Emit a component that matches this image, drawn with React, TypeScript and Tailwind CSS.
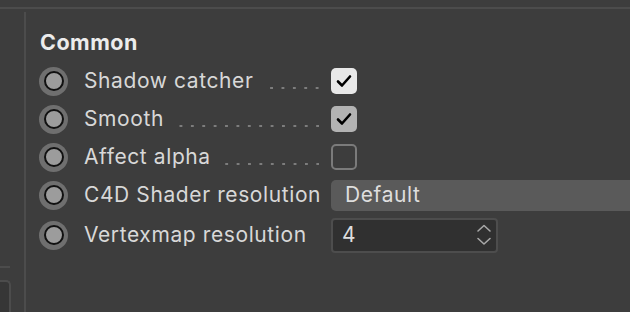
import React from 'react';

const font = { fontFamily: 'Inter, "Noto Sans", sans-serif' };

function Radio() {
  return (
    <div className="w-[29px] h-[29px] rounded-full bg-[#6f6f6f] flex items-center justify-center shrink-0">
      <div className="w-[20px] h-[20px] rounded-full bg-[#9c9c9c] border-2 border-[#111]" />
    </div>
  );
}

function Check({ variant }: { variant: 'active' | 'on' | 'off' }) {
  const box =
    variant === 'active'
      ? 'bg-[#e8e8e8]'
      : variant === 'on'
      ? 'bg-[#b3b3b3]'
      : 'border-2 border-[#7b7b7b]';
  return (
    <div className={`w-[26px] h-[26px] rounded-[5px] flex items-center justify-center ${box}`}>
      {variant !== 'off' && (
        <svg width="18" height="18" viewBox="0 0 18 18">
          <path d="M3 9.5 L7 13.5 L15 4.5" fill="none" stroke="#000" strokeWidth="2.6" strokeLinecap="round" strokeLinejoin="round" />
        </svg>
      )}
    </div>
  );
}

function Row({ label, dots, children, className = '' }: { label: string; dots?: boolean; children: React.ReactNode; className?: string }) {
  return (
    <div className={`flex items-center h-[38px] ${className}`}>
      <Radio />
      <div className="flex items-center w-[245px] ml-[16px] h-full">
        <span className="text-[21px] text-[#d8d8d8] whitespace-nowrap tracking-[0.6px]">{label}</span>
        {dots && (
          <div className="flex-1 ml-[9px] mr-[10px] self-stretch bg-[linear-gradient(to_right,transparent_8.4px,#7d7d7d_8.4px)] bg-[length:11.4px_2px] bg-repeat-x bg-[position:right_25px]" />
        )}
      </div>
      <div className="ml-[2px]">{children}</div>
    </div>
  );
}

export default function App() {
  return (
    <div className="w-[630px] h-[312px] bg-[#3d3d3d] overflow-hidden flex flex-col" style={font}>
      <div className="h-[7px] shrink-0" />
      <div className="h-[2px] bg-[#4c4c4c] shrink-0" />
      <div className="flex flex-1 min-h-0">
        {/* left panel edge */}
        <div className="w-[24px] flex flex-col shrink-0">
          <div className="flex-1" />
          <div className="h-[2px] w-[10px] bg-[#4c4c4c]" />
          <div className="h-[12px]" />
          <div className="h-[32px] w-[11px] bg-[#363636] border-t-2 border-r-2 border-[#4c4c4c] rounded-tr-[5px]" />
        </div>
        <div className="w-[2px] bg-[#4c4c4c] mt-[3px] shrink-0" />

        {/* main */}
        <div className="flex-1 flex flex-col pl-[13px]">
          <div className="h-[21px]" />
          <div className="text-[21.5px] font-bold text-[#ececec] pl-[1px] tracking-[0.5px] leading-[24px] h-[32px]">Common</div>
          <Row label="Shadow catcher" dots>
            <Check variant="active" />
          </Row>
          <Row label="Smooth" dots>
            <Check variant="on" />
          </Row>
          <Row label="Affect alpha" dots>
            <Check variant="off" />
          </Row>
          <Row label="C4D Shader resolution">
            <div className="w-[320px] h-[31px] rounded-[5px] bg-[#5a5a5a] flex items-center pl-[14px] text-[21px] tracking-[0.6px] text-[#dedede]">
              Default
            </div>
          </Row>
          <Row label="Vertexmap resolution" className="mt-[2px]">
            <div className="w-[167px] h-[35px] rounded-[4px] bg-[#303030] border-2 border-[#4d4d4d] flex items-center pl-[9px] pr-[3px] text-[21px] text-[#dedede]">
              <span className="flex-1">4</span>
              <svg width="18" height="26" viewBox="0 0 18 26">
                <path d="M3 9 L9 3.5 L15 9" fill="none" stroke="#a8a8a8" strokeWidth="1.6" strokeLinecap="round" strokeLinejoin="round" />
                <path d="M3 16.5 L9 22 L15 16.5" fill="none" stroke="#a8a8a8" strokeWidth="1.6" strokeLinecap="round" strokeLinejoin="round" />
              </svg>
            </div>
          </Row>
        </div>
      </div>
    </div>
  );
}
